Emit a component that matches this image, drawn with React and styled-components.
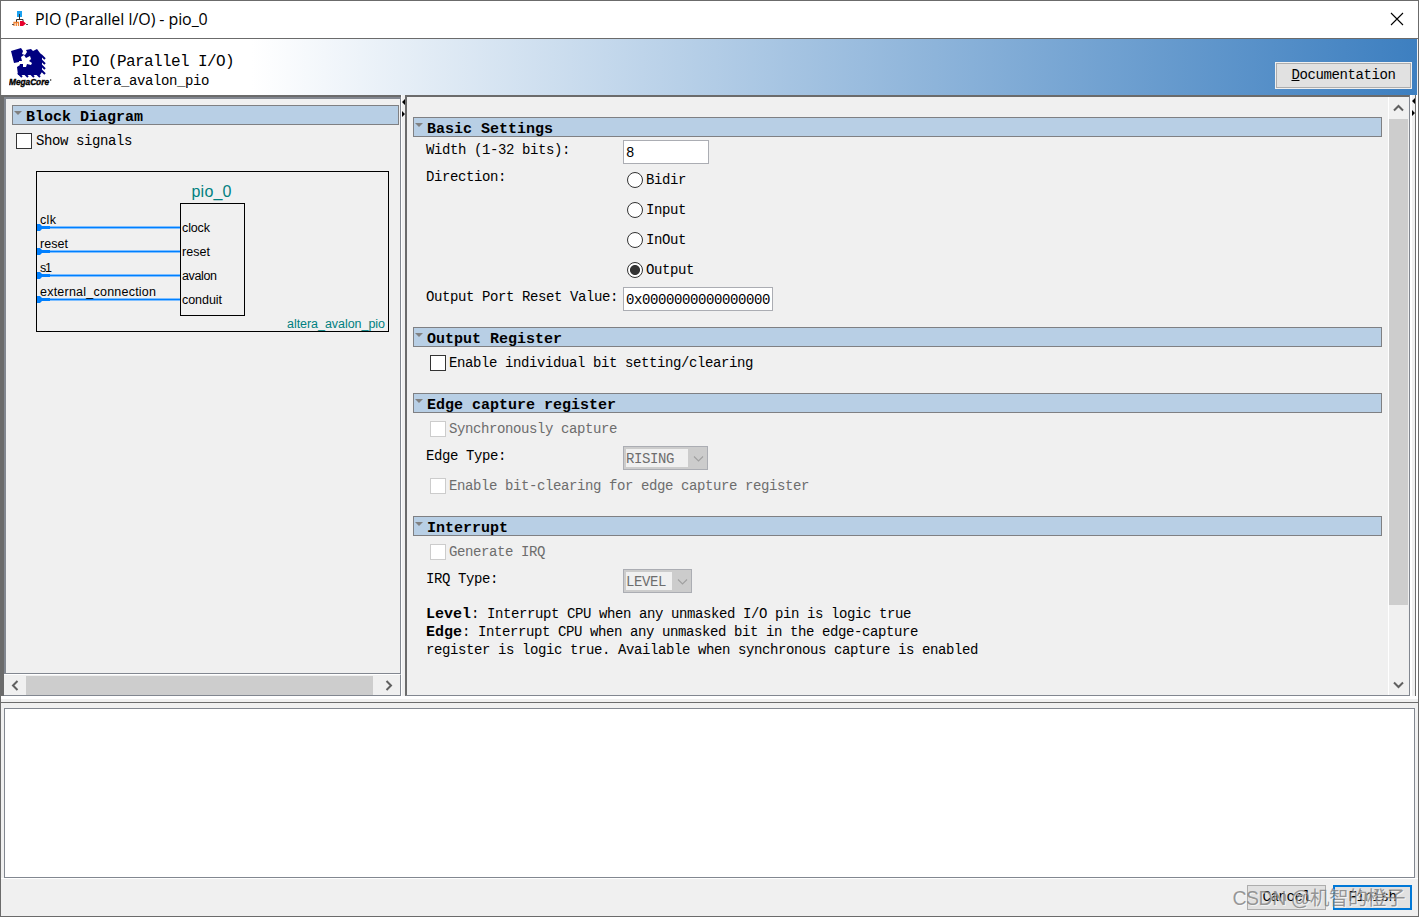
import { useState } from 'react';
import styled, { createGlobalStyle } from 'styled-components';

const colors = {
  face: '#f0f0f0',
  frame: '#6b6b6b',
  edge: '#828790',
  section: '#b8cfe5',
  thumb: '#cdcdcd',
  text: '#000',
  disabled: '#6d6d6d',
};

const GlobalStyle = createGlobalStyle`
  * {
    box-sizing: border-box;
  }
  body {
    margin: 0;
    overflow: hidden;
    color: ${colors.text};
    font-family: 'Liberation Mono', monospace;
    font-size: 14px;
    letter-spacing: -0.4px;
  }
`;

const Window = styled.div`
  position: relative;
  display: flex;
  flex-direction: column;
  width: 1419px;
  height: 917px;
  border: 1px solid ${colors.frame};
  background: ${colors.face};
`;

const TitleBar = styled.div`
  display: flex;
  align-items: center;
  height: 38px;
  flex: none;
  padding: 0 14px 1px 11px;
  background: #fff;
  border-bottom: 1px solid ${colors.frame};
`;

const WindowTitle = styled.div`
  flex: 1;
  margin-left: 7px;
  font-family: 'Open Sans', sans-serif;
  font-size: 16px;
  letter-spacing: -0.1px;
  line-height: 20px;
  white-space: pre;
`;

const Banner = styled.div`
  display: flex;
  height: 56px;
  flex: none;
  margin: 0 1px;
  padding: 8px 5px 0 7px;
  background: linear-gradient(to right, #fff 250px, #3d7fc0 100%);
`;

const BannerText = styled.div`
  flex: 1;
  margin-left: 20px;
  padding-top: 5px;
`;

const BannerName = styled.div`
  font-size: 16px;
  letter-spacing: -0.6px;
  line-height: 20px;
`;

const BannerKind = styled.div`
  margin-left: 1px;
  line-height: 18px;
`;

const Button = styled.button`
  width: ${(p) => p.$width}px;
  height: ${(p) => p.$height || 25}px;
  padding: 0 0 2px;
  border: ${(p) => (p.$primary ? '2px solid #0078d7' : '1px solid #adadad')};
  background: #e1e1e1;
  color: ${colors.text};
  font: inherit;
  letter-spacing: inherit;
`;

const DocButton = styled(Button)`
  margin-top: 15px;
  outline: 1px solid #f0f0f0;
  outline-offset: -1px;
  border: 2px solid #adadad;
`;

const Body = styled.div`
  display: flex;
  height: 601px;
  flex: none;
  background: #fff;
`;

const LeftPane = styled.div`
  display: flex;
  flex-direction: column;
  width: 400px;
  border-top: 2px solid ${colors.frame};
  border-left: 3px solid ${colors.frame};
`;

const LeftView = styled.div`
  flex: 1;
  padding: 6px 1px 0 6px;
  border: 1px solid ${colors.edge};
  border-width: 2px 1px 1px 2px;
  background: ${colors.face};
`;

const HScroll = styled.div`
  display: flex;
  align-items: center;
  height: 22px;
  border-right: 1px solid ${colors.edge};
  border-bottom: 1px solid ${colors.edge};
  border-top: 1px solid #fff;
  background: ${colors.face};
`;

const HThumb = styled.div`
  flex: 1;
  height: 19px;
  background: ${colors.thumb};
`;

const ScrollArrow = styled.div`
  display: flex;
  align-items: center;
  justify-content: center;
  width: ${(p) => p.$width}px;
  height: ${(p) => p.$height}px;
  padding-left: ${(p) => p.$shift || 0}px;
`;

const Divider = styled.div`
  width: 4px;
  padding-top: 1px;
  border-left: 1px solid #fff;
  background: ${colors.face};
`;

const OuterDivider = styled(Divider)`
  width: 6px;
  padding-top: 0;
  border-left-width: 2px;
  border-right: 1px solid ${colors.frame};
`;

const RightPane = styled.div`
  display: flex;
  width: 1005px;
  border: 1px solid ${colors.edge};
  border-top: 2px solid ${colors.frame};
  border-left: 2px solid ${colors.frame};
`;

const Params = styled.div`
  flex: 1;
  padding: 20px 6px 0;
  background: ${colors.face};
`;

const VScroll = styled.div`
  display: flex;
  flex-direction: column;
  width: 21px;
  border-left: 1px solid #fff;
  background: ${colors.face};
`;

const VThumb = styled.div`
  width: 19px;
  height: 486px;
  background: ${colors.thumb};
`;

const VTrack = styled.div`
  flex: 1;
`;

const Section = styled.section`
  height: ${(p) => p.$height}px;
`;

const SectionTitle = styled.div`
  display: flex;
  height: 20px;
  padding-left: 1px;
  border: 1px solid #7f8083;
  background: ${colors.section};
  font-size: 15px;
  font-weight: bold;
  letter-spacing: 0;
  line-height: 23px;
  white-space: pre;
`;

const Twisty = styled.span`
  width: 0;
  height: 0;
  margin: 5px 4px 0 0;
  border: 4px solid transparent;
  border-top-color: #808080;
  border-bottom: 0;
`;

const CheckLabel = styled.label`
  display: flex;
  align-items: center;
  height: 32px;
  padding-left: ${(p) => p.$indent}px;
  color: ${(p) => (p.$disabled ? colors.disabled : colors.text)};
`;

const Box = styled.span`
  width: 16px;
  height: 16px;
  margin-right: ${(p) => p.$gap || 3}px;
  border: 1px solid ${(p) => (p.$disabled ? '#cccccc' : '#333333')};
  background: #fff;
`;

const Field = styled.div`
  display: grid;
  grid-template-columns: 197px auto;
  align-items: start;
  justify-content: start;
  height: ${(p) => p.$height}px;
  padding-left: 13px;
`;

const FieldLabel = styled.div`
  padding-top: ${(p) => p.$top || 0}px;
  line-height: ${(p) => p.$line || 24}px;
  white-space: pre;
`;

const TextInput = styled.input`
  width: ${(p) => p.$width}px;
  height: 24px;
  margin-top: ${(p) => p.$top}px;
  padding: 1px 0 0 2px;
  border: 1px solid #abadb3;
  outline: none;
  font: inherit;
  letter-spacing: inherit;
`;

const RadioLabel = styled.label`
  display: flex;
  align-items: center;
  height: 30px;
  padding-left: 4px;
`;

const Dot = styled.span`
  width: 16px;
  height: 16px;
  margin-right: 3px;
  border: 1px solid #333;
  border-radius: 50%;
  background: ${(p) => (p.$on ? 'radial-gradient(circle, #333 4.6px, #fff 5.4px)' : '#fff')};
`;

const Select = styled.div`
  display: flex;
  align-items: center;
  width: ${(p) => p.$width}px;
  height: 24px;
  margin-top: 1px;
  padding: 2px 0 2px 2px;
  border: 1px solid #abadb3;
  background: #cccccc;
  color: ${colors.disabled};
`;

const SelectValue = styled.div`
  flex: 1;
  height: 18px;
  background: ${colors.face};
  line-height: 20px;
`;

const Help = styled.p`
  margin: 12px 0 0 13px;
  line-height: 18px;
  white-space: pre;

  b {
    font-size: 15px;
    letter-spacing: 0;
    line-height: 1;
  }
`;

const Messages = styled.div`
  height: 170px;
  margin: 5px 3px 0;
  border: 1px solid ${colors.edge};
  background: #fff;
`;

const Splitter = styled.div`
  height: 7px;
  flex: none;
  border-top: 3px solid #fff;
  border-bottom: 1px solid ${colors.frame};
`;

const Footer = styled.div`
  display: flex;
  flex: 1;
  justify-content: flex-end;
  gap: 7px;
  padding: 6px 6px 0;
  border-top: 1px solid #fff;
`;

const Watermark = styled.div`
  position: absolute;
  right: 13px;
  bottom: 3px;
  color: rgba(120, 120, 120, 0.75);
  font-family: 'Liberation Sans', 'Noto Sans CJK SC', sans-serif;
  font-size: 19.5px;
  letter-spacing: -0.5px;
  line-height: 30px;
  text-shadow: 1px 1px 0 rgba(255, 255, 255, 0.6);
  white-space: nowrap;
`;

const Drawing = styled.svg`
  display: block;
  flex: none;
`;

const Diagram = styled.svg`
  display: block;
  margin: 14px 0 0 24px;
  font-family: 'Liberation Sans', Arial, sans-serif;
  font-size: 12.5px;
  letter-spacing: 0;
`;

function Chevron({ dir, color = '#606060', width = 2, size = 11 }) {
  const paths = {
    up: 'M1 7.5 L5.5 3 L10 7.5',
    down: 'M1 3.5 L5.5 8 L10 3.5',
    left: 'M7.5 1 L3 5.5 L7.5 10',
    right: 'M3.5 1 L8 5.5 L3.5 10',
  };
  return (
    <Drawing width={size} height={size} viewBox="0 0 11 11">
      <path d={paths[dir]} fill="none" stroke={color} strokeWidth={width} />
    </Drawing>
  );
}

function SplitArrows() {
  return (
    <Drawing width="3" height="24" viewBox="0 0 3 24">
      <path d="M3 3 L0 6 L3 9 Z M0 15 L3 18 L0 21 Z" />
    </Drawing>
  );
}

function AppIcon() {
  return (
    <Drawing width="16" height="16" viewBox="0 0 16 16">
      <rect x="5" y="0" width="5" height="6" fill="#1ba1f0" />
      <path d="M7.5 3 V9 M4.5 11 V8.5 H11 V11" fill="none" stroke="#333" />
      <path d="M2 15 V11.5 H4.3 V15 M4.3 11.5 H6.5 V15" fill="none" stroke="#f08030" strokeWidth="1.3" />
      <path d="M8 10 H11 L14 12.5 L11 15 H8 Z" fill="#e8002c" />
      <path d="M0 13.5 H2 M14 13.5 H16" stroke="#555" />
    </Drawing>
  );
}

function MegaCoreLogo() {
  return (
    <Drawing width="43" height="41" viewBox="0 0 43 41">
      <path
        d="M2 4 L12 1 L14 4 L13 7 L16 8 L18 5 L17 3 L22 2 L24 4 L28 2 L31 6 L33 8 L33 25 L31 28 L9 28 L8 20 L11 18 L10 15 L5 16 Z"
        fill="#000080"
      />
      <path
        d="M12 10 L15 8 L17 11 L21 9 L22 12 L20 14 L23 16 L22 18 L18 17 L17 20 L14 20 L14 17 L10 17 L10 14 L13 14 Z"
        fill="#fff"
      />
      <path
        d="M32 8 L36 12 M32 13 L36 17 M32 18 L36 22 M32 23 L36 27 M9 26 L13 30 M15 26 L19 30 M21 26 L25 30 M27 26 L31 30"
        stroke="#000080"
        strokeWidth="2"
      />
      <text
        x="0"
        y="38"
        textLength="40"
        lengthAdjust="spacingAndGlyphs"
        fontFamily="Liberation Sans"
        fontSize="8.5"
        fontWeight="bold"
        fontStyle="italic"
        letterSpacing="0"
        stroke="#000"
        strokeWidth="0.4"
      >
        MegaCore
      </text>
      <circle cx="41.7" cy="33" r="0.7" />
    </Drawing>
  );
}

const ports = [
  { name: 'clk', nameWidth: 16, type: 'clock', typeWidth: 28 },
  { name: 'reset', nameWidth: 28, type: 'reset', typeWidth: 28 },
  { name: 's1', nameWidth: 12, type: 'avalon', typeWidth: 35 },
  { name: 'external_connection', nameWidth: 116, type: 'conduit', typeWidth: 40 },
];

function BlockDiagram() {
  return (
    <Diagram width="353" height="162" viewBox="0 0 353 162">
      <rect x="0.5" y="0.5" width="352" height="160" fill="none" stroke="#000" />
      <text x="155.5" y="26" fontSize="16" textLength="40" fill="#008080">
        pio_0
      </text>
      <rect x="144.5" y="32.5" width="64" height="112" fill="none" stroke="#000" />
      {ports.map((port, i) => (
        <g key={port.name} transform={`translate(0 ${i * 24})`}>
          <path d="M1 56.5 H144" stroke="#80bfff" strokeWidth="3" />
          <path d="M1 56.5 H144" stroke="#0080ff" />
          <path d="M1 53 H4 L6 55 H14 V58 H6 L4 60 H1 Z" fill="#0080ff" />
          <text x="4" y="53" textLength={port.nameWidth}>
            {port.name}
          </text>
          <text x="146" y="61" textLength={port.typeWidth}>
            {port.type}
          </text>
        </g>
      ))}
      <text x="251" y="157" textLength="98" fill="#008080">
        altera_avalon_pio
      </text>
    </Diagram>
  );
}

function Check({ label, indent = 17, gap, disabled }) {
  return (
    <CheckLabel $indent={indent} $disabled={disabled}>
      <Box $disabled={disabled} $gap={gap} />
      {label}
    </CheckLabel>
  );
}

function DisabledSelect({ value, width }) {
  return (
    <Select $width={width}>
      <SelectValue>{value}</SelectValue>
      <ScrollArrow $width={19} $height={18} $shift={2}>
        <Chevron dir="down" color="#a0a0a0" width={1.1} />
      </ScrollArrow>
    </Select>
  );
}

const directions = ['Bidir', 'Input', 'InOut', 'Output'];

export default function App() {
  const [direction, setDirection] = useState('Output');
  return (
    <Window>
      <GlobalStyle />
      <TitleBar>
        <AppIcon />
        <WindowTitle>PIO (Parallel I/O) - pio_0</WindowTitle>
        <Drawing width="14" height="14" viewBox="0 0 14 14">
          <path d="M1 1 L13 13 M13 1 L1 13" stroke="#000" strokeWidth="1.1" />
        </Drawing>
      </TitleBar>
      <Banner>
        <MegaCoreLogo />
        <BannerText>
          <BannerName>PIO (Parallel I/O)</BannerName>
          <BannerKind>altera_avalon_pio</BannerKind>
        </BannerText>
        <DocButton $width={137} $height={27}>
          <u>D</u>ocumentation
        </DocButton>
      </Banner>
      <Body>
        <LeftPane>
          <LeftView>
            <SectionTitle>
              <Twisty />
              Block Diagram
            </SectionTitle>
            <Check label="Show signals" indent={4} gap={4} />
            <BlockDiagram />
          </LeftView>
          <HScroll>
            <ScrollArrow $width={22} $height={19}>
              <Chevron dir="left" />
            </ScrollArrow>
            <HThumb />
            <ScrollArrow $width={27} $height={19} $shift={4}>
              <Chevron dir="right" />
            </ScrollArrow>
          </HScroll>
        </LeftPane>
        <Divider>
          <SplitArrows />
        </Divider>
        <RightPane>
          <Params>
            <Section $height={210}>
              <SectionTitle>
                <Twisty />
                Basic Settings
              </SectionTitle>
              <Field $height={28}>
                <FieldLabel $top={1}>Width (1-32 bits):</FieldLabel>
                <TextInput $width={86} $top={3} defaultValue="8" />
              </Field>
              <Field $height={120}>
                <FieldLabel>Direction:</FieldLabel>
                <div>
                  {directions.map((name) => (
                    <RadioLabel key={name} onClick={() => setDirection(name)}>
                      <Dot $on={name === direction} />
                      {name}
                    </RadioLabel>
                  ))}
                </div>
              </Field>
              <Field $height={42}>
                <FieldLabel>Output Port Reset Value:</FieldLabel>
                <TextInput $width={150} $top={2} defaultValue="0x0000000000000000" />
              </Field>
            </Section>
            <Section $height={66}>
              <SectionTitle>
                <Twisty />
                Output Register
              </SectionTitle>
              <Check label="Enable individual bit setting/clearing" />
            </Section>
            <Section $height={123}>
              <SectionTitle>
                <Twisty />
                Edge capture register
              </SectionTitle>
              <Check label="Synchronously capture" disabled />
              <Field $height={25}>
                <FieldLabel $line={22}>Edge Type:</FieldLabel>
                <DisabledSelect value="RISING" width={85} />
              </Field>
              <Check label="Enable bit-clearing for edge capture register" disabled />
            </Section>
            <Section $height={160}>
              <SectionTitle>
                <Twisty />
                Interrupt
              </SectionTitle>
              <Check label="Generate IRQ" disabled />
              <Field $height={25}>
                <FieldLabel $line={22}>IRQ Type:</FieldLabel>
                <DisabledSelect value="LEVEL" width={69} />
              </Field>
              <Help>
                <b>Level</b>: Interrupt CPU when any unmasked I/O pin is logic true
                <br />
                <b>Edge</b>: Interrupt CPU when any unmasked bit in the edge-capture
                <br />
                register is logic true. Available when synchronous capture is enabled
              </Help>
            </Section>
          </Params>
          <VScroll>
            <ScrollArrow $width={19} $height={22}>
              <Chevron dir="up" />
            </ScrollArrow>
            <VThumb />
            <VTrack />
            <ScrollArrow $width={19} $height={22}>
              <Chevron dir="down" />
            </ScrollArrow>
          </VScroll>
        </RightPane>
        <OuterDivider>
          <SplitArrows />
        </OuterDivider>
      </Body>
      <Splitter />
      <Messages />
      <Footer>
        <Button $width={79}>Cancel</Button>
        <Button $width={79} $primary>
          Finish
        </Button>
      </Footer>
      <Watermark>CSDN @机智的橙子</Watermark>
    </Window>
  );
}
